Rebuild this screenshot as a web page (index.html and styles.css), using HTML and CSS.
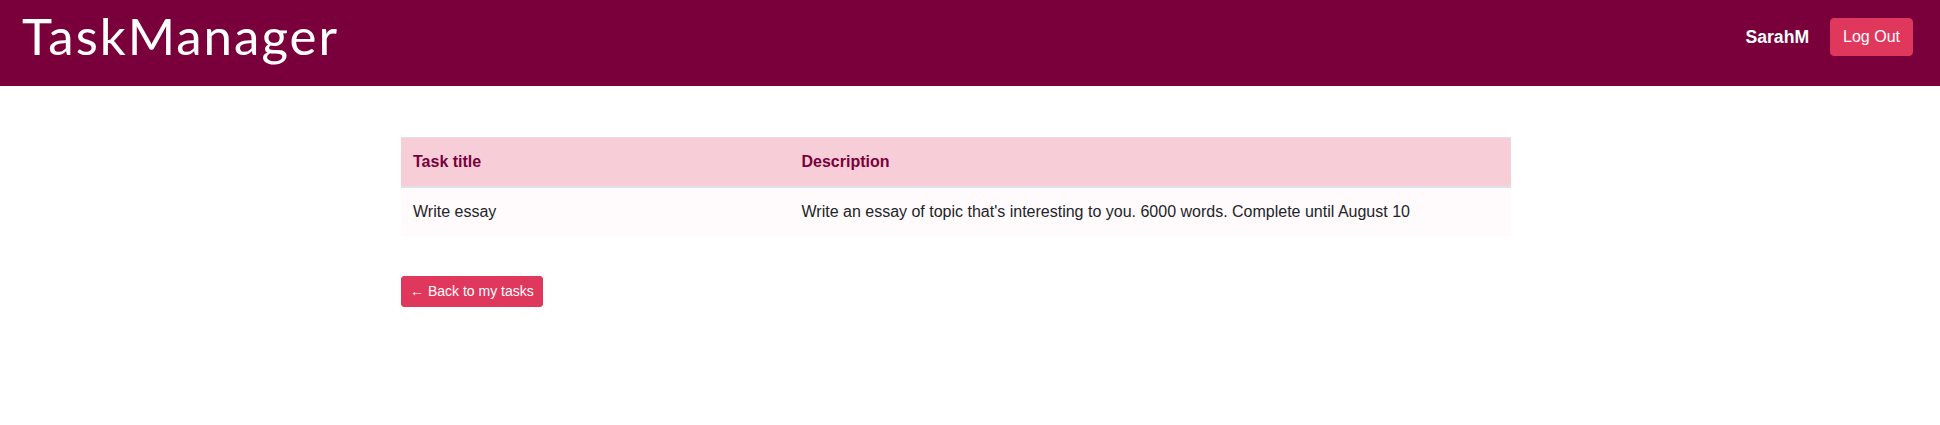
FILE: index.html
```html
<!DOCTYPE html>
<html lang="en">
<head>
<meta charset="utf-8">
<title>TaskManager</title>
<link rel="stylesheet" href="styles.css">
</head>
<body>
<header class="topbar">
  <div class="brand">TaskManager</div>
  <nav class="user-nav">
    <span class="username">SarahM</span>
    <button class="btn btn-logout" type="button">Log Out</button>
  </nav>
</header>
<main class="container">
  <table class="task-table">
    <thead>
      <tr>
        <th class="col-title">Task title</th>
        <th>Description</th>
      </tr>
    </thead>
    <tbody>
      <tr>
        <td>Write essay</td>
        <td>Write an essay of topic that's interesting to you. 6000 words. Complete until August 10</td>
      </tr>
    </tbody>
  </table>
  <a class="btn btn-back" href="#">&larr; Back to my tasks</a>
</main>
</body>
</html>
```

FILE: styles.css
```css
* { box-sizing: border-box; }

html, body {
  margin: 0;
  padding: 0;
  background: #ffffff;
}

body {
  font-family: "Liberation Sans", Arial, sans-serif;
  font-size: 16px;
  line-height: 1.5;
  color: #212529;
}

.topbar {
  height: 86px;
  background: #7a003c;
  display: flex;
  justify-content: space-between;
  align-items: flex-start;
  padding: 0 27px 0 22px;
}

.brand {
  font-family: Lato, "Open Sans", sans-serif;
  font-size: 51px;
  line-height: 1;
  font-weight: 400;
  letter-spacing: 2px;
  color: #ffffff;
  margin-top: 10px;
}

.user-nav {
  display: flex;
  align-items: center;
  gap: 21px;
  margin-top: 18px;
}

.username {
  color: #ffffff;
  font-weight: 700;
  font-size: 17.6px;
}

.btn {
  display: inline-block;
  font-family: "Liberation Sans", Arial, sans-serif;
  background: #e0385c;
  color: #ffffff;
  border: 1px solid #e0385c;
  text-decoration: none;
  cursor: pointer;
}

.btn-logout {
  font-size: 16px;
  line-height: 24px;
  padding: 6px 12px;
  border-radius: 4px;
}

.container {
  width: 1110px;
  margin: 51px 0 0 401px;
}

.task-table {
  width: 100%;
  border-collapse: collapse;
  border-top: 1px solid #dee2e6;
}

.task-table th,
.task-table td {
  text-align: left;
  padding: 12px;
  vertical-align: top;
}

.task-table thead th {
  background: #f7ced7;
  color: #7a003c;
  font-weight: 700;
  border-bottom: 2px solid #dee2e6;
}

.col-title { width: 35%; }

.task-table tbody td {
  background: #fffafb;
}

.btn-back {
  margin-top: 40px;
  font-size: 14px;
  line-height: 21px;
  padding: 4px 8px;
  border-radius: 3px;
}
```
